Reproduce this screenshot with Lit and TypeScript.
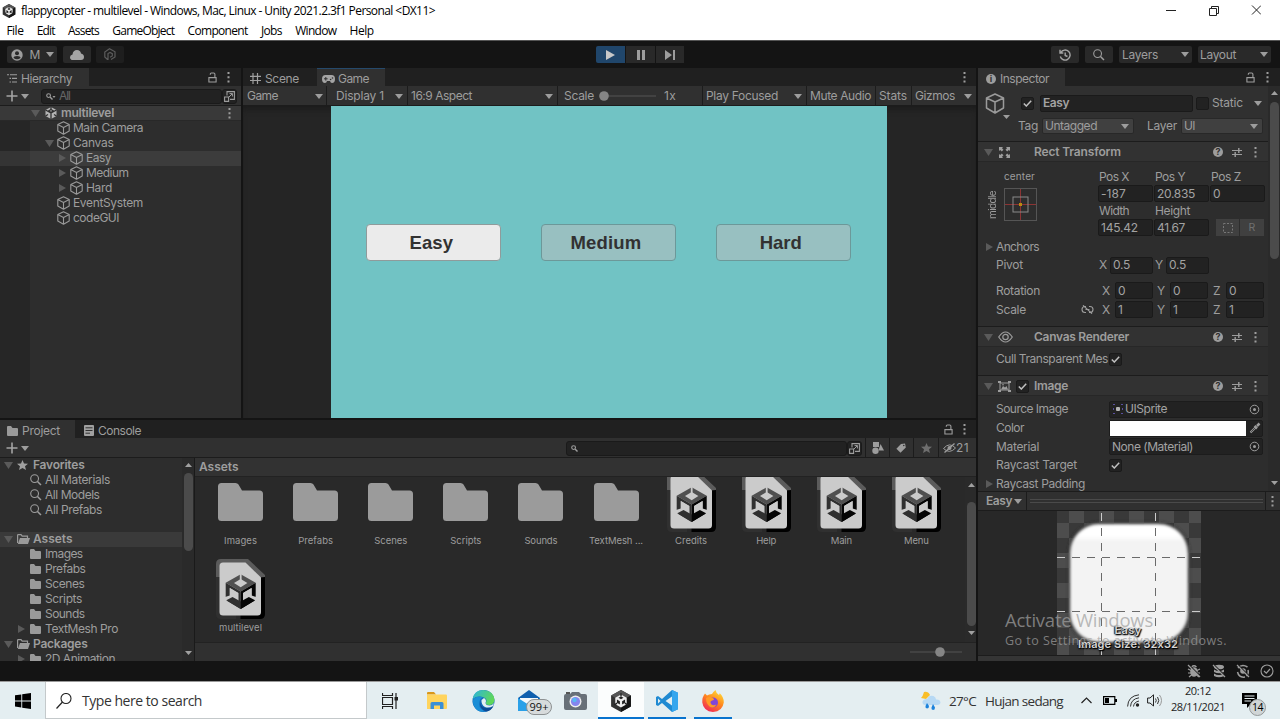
import { LitElement, html, svg, css, unsafeCSS, nothing } from "lit";
import { customElement, property } from "lit/decorators.js";
import { classMap } from "lit/directives/class-map.js";

const pen = document.createElement("canvas").getContext("2d")!;

/* A label that tracks its letters so the line fills a given width. */
@customElement("fit-text")
class FitText extends LitElement {
  @property() text = "";
  @property({ type: Number }) w = 0;
  static styles = css`
    :host { display: inline-block; flex: none; white-space: pre; }
    span { display: block; }
  `;
  render() {
    pen.font = getComputedStyle(this).font;
    const natural = pen.measureText(this.text).width;
    const n = Math.max(1, this.text.length);
    const ls = this.w ? (this.w - natural) / n : 0;
    return html`<span style="letter-spacing:${ls.toFixed(3)}px">${this.text}</span>`;
  }
}

const t = (text: string, w = 0, cls = "") => html`<fit-text class=${cls} .text=${text} .w=${w}></fit-text>`;
const ic = (w: number, h: number, body: unknown, cls = "") =>
  html`<svg class=${"ic " + cls} width=${w} height=${h} viewBox="0 0 ${w} ${h}">${body}</svg>`;

const caret = (cls = "") => ic(8, 5, svg`<path d="M0 0h8L4 5z" fill="#9d9d9d"/>`, cls);
const up = (cls = "") => ic(7, 4, svg`<path d="M0 4h7L3.500 0z" fill="#a0a0a0"/>`, cls);
const down = (cls = "") => ic(7, 4, svg`<path d="M0 0h7L3.500 4z" fill="#a0a0a0"/>`, cls);
const foldOpen = (cls = "") => ic(9, 7, svg`<path d="M0 0h9L4.500 7z" fill="#5a5a5a"/>`, cls);
const foldShut = (cls = "") => ic(7, 8, svg`<path d="M0 0v8L7 4z" fill="#5a5a5a"/>`, cls);
const dots = (cls = "") => ic(3, 11, svg`<path d="M.5 0h2v2h-2zM.5 4.200h2v2h-2zM.5 8.500h2v2h-2z" fill="#9d9d9d"/>`, cls);
const lock = (cls = "") => ic(9, 11, svg`<path d="M.9 5.600h7.200v4.400H.9zM2.300 2.800V2q0-1 1-1h2.400q1.200 0 1.200 1.200v3.400" fill="none" stroke="#9d9d9d" stroke-width="1.100"/>`, cls);
const plus = (cls = "") => ic(12, 12, svg`<path d="M6 .5v11M.5 6h11" stroke="#a4a4a4" stroke-width="1.600"/>`, cls);
const cube = (cls = "") => ic(13, 14, svg`<path d="M6.500 .8L12.200 3.600V10L6.500 13.200L.8 10V3.600zM.8 3.600L6.500 6.500L12.200 3.600M6.500 6.500V13.200" fill="none" stroke="#9a9a9a" stroke-width="1.100" stroke-linejoin="round"/>`, cls);
const bigCube = (cls = "") => ic(20, 21, svg`<path d="M10 1L18.500 5V15L10 20L1.500 15V5zM1.500 5L10 9L18.500 5M10 9V20" fill="none" stroke="#9a9a9a" stroke-width="1.500" stroke-linejoin="round"/>`, cls);
const miniFolder = (cls = "") => ic(11, 10, svg`<path d="M0 1Q0 0 1 0H4L5.500 2H10Q11 2 11 3V9Q11 10 10 10H1Q0 10 0 9z" fill="#9a9a9a"/>`, cls);
const openFolder = (cls = "") => ic(13, 10, svg`<path d="M.6 9V1.200Q.6 .6 1.200 .6H4L5.200 2.200H10.500V4" fill="none" stroke="#9a9a9a" stroke-width="1.200"/><path d="M3 4H13L11 10H.8z" fill="#9a9a9a"/>`, cls);
const glass = (cls = "") => ic(12, 12, svg`<circle cx="4.600" cy="4.600" r="3.900" fill="none" stroke="#9d9d9d" stroke-width="1.100"/><path d="M7.500 7.500L11 11" stroke="#9d9d9d" stroke-width="1.500"/>`, cls);
const tinyGlass = (cls = "", menu = false) => ic(10, 7, svg`<circle cx="2.600" cy="2.600" r="1.900" fill="none" stroke="#9d9d9d" stroke-width="1.100"/><path d="M4 4L6.500 6.500" stroke="#9d9d9d" stroke-width="1.400"/>${menu ? svg`<path d="M6.500 3h3L8 5z" fill="#9d9d9d"/>` : nothing}`, cls);
const popout = (cls = "") => ic(11, 11, svg`<path d="M3 4.500V.6H10.400V8.400H6M.6 6H4.600V10.400H.6z" fill="none" stroke="#9d9d9d" stroke-width="1.100"/><path d="M5 6L8.300 2.700M5.500 2.600H8.400V5.500" fill="none" stroke="#9d9d9d"/>`, cls);
const check = (cls = "") => ic(9, 7, svg`<path d="M.8 3.500L3.300 6L8.200 .8" fill="none" stroke="#c0c0c0" stroke-width="1.500"/>`, cls);
const help = (cls = "") => html`<span class=${"help " + cls}>?</span>`;
const preset = (cls = "") => ic(10, 9, svg`<path d="M0 2.500H10M0 6.500H10" stroke="#9d9d9d"/><path d="M6.800 0V5M3.200 4V9" stroke="#9d9d9d" stroke-width="1.400"/>`, cls);
const target = (cls = "") => ic(11, 11, svg`<circle cx="5.500" cy="5.500" r="4.300" fill="none" stroke="#9d9d9d"/><circle cx="5.500" cy="5.500" r="1.500" fill="#9d9d9d"/>`, cls);
const star = (fill: string, cls = "") => ic(11, 10, svg`<path d="M5.500 0L7 3.500L11 3.800L8 6.300L9 10L5.500 8L2 10L3 6.300L0 3.800L4 3.500z" fill=${fill}/>`, cls);

const unityHex = (w: number) => html`<svg class="ic" width=${w} height=${w} viewBox="0 0 20 20">
  <path d="M10 0L19 5V15L10 20L1 15V5z" fill="#333"/><path d="M10 0L19 5L10 10L1 5z" fill="#555"/><path d="M19 5V15L10 20V10z" fill="#151515"/>
  <path d="M10 4L15.200 7V13L10 16L4.800 13V7z" fill="#eee"/>
  <path d="M10 5.800L12.300 7.100L10 8.500L7.700 7.100zM6.300 8.600L9 10.200V13.200L6.300 11.700zM13.700 8.600L11 10.200V13.200L13.700 11.700z" fill="#222"/>
  <path d="M10 3V6M4 13.500L6.500 12M16 13.500L13.500 12" stroke="#222" stroke-width="1.300"/></svg>`;

const sceneGlyph = (cls = "") => ic(12, 12, svg`<path d="M6 0L11.500 3V9L6 12L.5 9V3z" fill="#b4b4b4"/><path d="M6 6V12M6 6L.5 3M6 6L11.500 3M6 2.500L8.500 4L6 5.300L3.500 4zM6 0V3M.5 9L3 7.500M11.500 9L9 7.500" stroke="#303030" stroke-width="1.300" fill="none"/>`, cls);

const folderArt = html`<svg class="art" width="49" height="60" viewBox="0 0 49 60"><path d="M2 14.500Q2 11 5.500 11H19.500Q21.500 11 22.500 12.500L26 18.500H43.500Q47 18.500 47 22V45.500Q47 49 43.500 49H5.500Q2 49 2 45.500z" fill="#9b9b9b"/></svg>`;
const sceneArt = html`<svg class="art" width="49" height="60" viewBox="0 0 49 60">
  <path d="M0 18V5Q0 0 5 0H32L49 16V20L40 18z" fill="#5b5b5b"/><path d="M0 18H20V60H5Q0 60 0 55z" fill="#303030"/>
  <path d="M24.500 20L49 18V55Q49 60 44 60H24.500z" fill="#000"/>
  <path d="M3.500 7Q3.500 3.500 7 3.500H29.500L45 18.500V53Q45 56.500 41.500 56.500H7Q3.500 56.500 3.500 53z" fill="#cbcbcb"/>
  <path d="M24.700 15.300L39.700 23.800L24.700 32.600L9.700 23.800zM24.700 20L18 24L24.700 28.200L31.400 24z" fill="#505050" fill-rule="evenodd"/>
  <path d="M9.700 23.800L24.700 32.600V50L9.700 41zM13.800 29V40.500L22.300 45.500V34z" fill="#303030" fill-rule="evenodd"/>
  <path d="M39.700 23.800L24.700 32.600V50L39.700 41zM35.600 29V40.500L27.100 45.500V34z" fill="#050505" fill-rule="evenodd"/>
  <path d="M13.800 29L22.300 34V42.500L16 39.500L9 42.500V38L13.800 36.500zM35.600 29L27.100 34V42.500L33.400 39.500L40.400 42.500V38L35.600 36.500z" fill="#cbcbcb"/>
  <path d="M10.300 41.300L16.500 37.900L24.700 42.500V50z" fill="#303030"/><path d="M39.100 41.300L32.900 37.900L24.700 42.500V50z" fill="#050505"/>
  <path d="M24.700 15V21.500" stroke="#cbcbcb" stroke-width="1.800"/></svg>`;

const px = (prop: string, key: string, max: number) =>
  Array.from({ length: max + 1 }, (_, i) => `.${key}${i}{${prop}:${i}px}`).join("");
const utilities = unsafeCSS(px("margin-left", "l", 60) + px("width", "w", 184) + px("height", "h", 60));

interface Node { name: string; w: number; indent: string; fold?: string; on?: boolean }
const tree: Node[] = [
  { name: "Main Camera", w: 70, indent: "l57" },
  { name: "Canvas", w: 40.500, indent: "l45", fold: "open" },
  { name: "Easy", w: 25, indent: "l59", fold: "shut", on: true },
  { name: "Medium", w: 42.500, indent: "l59", fold: "shut" },
  { name: "Hard", w: 26, indent: "l59", fold: "shut" },
  { name: "EventSystem", w: 70, indent: "l57" },
  { name: "codeGUI", w: 46, indent: "l57" },
];
const folders: [string, number, number][] = [["Images", 37.500, 33], ["Prefabs", 40.500, 35], ["Scenes", 39.500, 33], ["Scripts", 37, 31], ["Sounds", 39.500, 33]];
const assets: [string, number, boolean][] = [
  ...folders.map(([n, , w]) => [n, w, false] as [string, number, boolean]),
  ["TextMesh ...", 54, false], ["Credits", 32, true], ["Help", 20, true], ["Main", 21, true], ["Menu", 25, true], ["multilevel", 43, true],
];

@customElement("app-root")
class AppRoot extends LitElement {
  static styles = [utilities, css`
    :host { display: flex; flex-direction: column; width: 1280px; height: 719px; overflow: hidden; background: #141414; color: #9d9d9d; font: 12px/14px Inter, "Noto Sans", sans-serif; position: relative; }
    * { box-sizing: border-box; }
    .ic, .art { display: block; flex: none; }
    .r { display: flex; align-items: center; flex: none; }
    .g { flex: 1; }
    .b { font-weight: 600; }
    .pl { padding-left: 18px; }
    .win { background: #fff; color: #000; font-family: "Open Sans", "Noto Sans", sans-serif; }
    .title { height: 22px; padding-left: 2px; }
    .menu { height: 19px; padding: 0 0 1px 6.400px; border-bottom: 1px solid #555; }
    .menu .item + .item { margin-left: 13.300px; }
    .tools { height: 27px; }
    .gap { width: 367px; }
    .btn { display: flex; align-items: center; justify-content: center; flex: none; height: 17px; background: #292929; border-radius: 2px; }
    .btn.dim { background: #1e1e1e; }
    .btn.play { background: #20466b; border-radius: 2px 0 0 2px; }
    .btn.sq { border-radius: 0; }
    .drop { justify-content: flex-start; }
    .main { display: flex; height: 593px; gap: 2px; flex: none; }
    .left { width: 976px; display: flex; flex-direction: column; gap: 2px; }
    .top { display: flex; height: 350px; gap: 2px; }
    .panel { background: #2d2d2d; display: flex; flex-direction: column; overflow: hidden; }
    .tabs { height: 18px; background: #202020; }
    .tab { display: flex; align-items: center; height: 18px; flex: none; padding-top: 3px; }
    .tab.on { background: #303030; }
    .tab.live { box-shadow: inset 0 1px #25496b; }
    .bar { height: 20px; background: #303030; border-bottom: 1px solid #1c1c1c; padding-top: 1px; }
    .box { display: flex; align-items: center; flex: none; background: #222; border: 1px solid #1a1a1a; border-radius: 3px; }
    .search { width: 281px; height: 15px; }
    .dimt { color: #666; }
    .hier { width: 241px; }
    .hbody { flex: 1; background: linear-gradient(90deg, #262626 30px, #2d2d2d 30px); }
    .row { display: flex; align-items: center; height: 15px; padding-bottom: 1px; }
    .row.on { background: linear-gradient(90deg, #343434 30px, #3c3c3c 30px); }
    .row.scene { background: #393939; box-shadow: inset 0 -1px #282828; }
    .game { width: 733px; }
    .sep { width: 1px; height: 19px; margin-top: -1px; background: #1c1c1c; flex: none; }
    .stage { display: flex; height: 312px; background: #252525; padding-left: 88px; box-shadow: inset 0 6px 6px -3px #1b1b1b; }
    .view { width: 556px; height: 312px; background: #71c3c4; display: flex; padding: 118px 0 0 35.300px; gap: 39.700px; }
    .gbtn { width: 135px; height: 37px; border-radius: 4px; border: 1px solid #6c9899; background: #98c0c1; color: #323232; font: bold 18.500px/36px "Liberation Sans", Arial, sans-serif; text-align: center; padding-right: 5px; }
    .gbtn.on { background: #ebebeb; border-color: #8f9b9b; }
    .project { height: 241px; width: 976px; }
    .pbody { display: flex; height: 203px; }
    .list { width: 182px; height: 203px; overflow: hidden; flex: none; }
    .list .row.on { background: #3a3a3a; }
    .blank { height: 14px; }
    .scroll { width: 12px; flex: none; display: flex; flex-direction: column; align-items: center; background: #2a2a2a; }
    .thumb { width: 9px; border-radius: 5px; background: #4b4b4b; flex: none; }
    .th1 { height: 78px; }
    .th2 { height: 124px; }
    .th3 { height: 157px; }
    .content { flex: 1; min-width: 0; border-left: 1px solid #1a1a1a; display: flex; flex-direction: column; background: #292929; }
    .crumb { height: 19px; background: #323232; border-bottom: 1px solid #222; padding-left: 4px; }
    .gridrow { display: flex; height: 165px; }
    .grid { width: 770px; flex: none; height: 165px; overflow: hidden; display: grid; grid-template-columns: repeat(10, 75.100px); grid-auto-rows: 87px; padding-left: 8px; align-content: start; }
    .cell { display: flex; flex-direction: column; align-items: center; height: 87px; font-size: 9.500px; line-height: 12px; }
    .cell .art { margin-top: -5px; margin-bottom: 3px; }
    .foot { height: 19px; background: #303030; border-top: 1px solid #222; }
    .insp { width: 302px; background: #2d2d2d; display: flex; flex-direction: column; }
    .ibody { display: flex; height: 405px; }
    .icol { width: 290px; height: 405px; overflow: hidden; flex: none; }
    .ihead { height: 56px; background: #303030; border-bottom: 1px solid #1c1c1c; }
    .hh { height: 12px; }
    .smallc { align-self: flex-start; margin-top: -5px; }
    .comp { display: flex; align-items: center; height: 20px; background: #323232; border-bottom: 1px solid #272727; padding-top: 1px; }
    .block { border-bottom: 1px solid #1c1c1c; }
    .chk { display: flex; align-items: center; justify-content: center; flex: none; width: 13px; height: 13px; background: #222; border: 1px solid #1a1a1a; border-radius: 2px; }
    .dd { display: flex; align-items: center; height: 16px; background: #404040; border: 1px solid #282828; border-radius: 2px; flex: none; }
    .f { display: flex; align-items: center; height: 17px; background: #222; border: 1px solid #1a1a1a; border-radius: 2px; padding-left: 2px; color: #a2a2a2; flex: none; }
    .help { display: flex; align-items: center; justify-content: center; width: 10px; height: 10px; border-radius: 50%; background: #9d9d9d; color: #303030; font: bold 9px/10px Inter, sans-serif; flex: none; }
    .rect { display: grid; grid-template-columns: 120px 56px 56px 55px; grid-template-rows: 23px 17px 17px 17px; height: 76px; }
    .rect > .lab { align-self: end; padding-left: 1px; line-height: 16px; }
    .anchor { grid-row: 1 / span 4; display: grid; grid-template-columns: 26px 34px; grid-template-rows: 26px 34px; font-size: 10px; }
    .anchor .cl { grid-column: 1 / 3; padding: 7px 0 0 26px; }
    .anchor .vl { writing-mode: vertical-rl; transform: rotate(180deg); justify-self: center; align-self: center; height: 28px; line-height: 12px; margin-left: 2px; }
    .tb { background: #404040; height: 17px; display: flex; align-items: center; justify-content: center; color: #707070; font-size: 10.500px; }
    .obj { display: flex; align-items: center; width: 154px; height: 17px; background: #222; border: 1px solid #1c1c1c; border-radius: 2px; color: #a2a2a2; flex: none; }
    .hr { height: 18.700px; }
    .swatch { width: 136px; height: 15px; background: #fff; }
    .phead { height: 20px; background: #303030; border-top: 1px solid #1c1c1c; border-bottom: 1px solid #1c1c1c; }
    .lines { width: 233px; height: 4px; border-top: 1px solid #4a4a4a; border-bottom: 1px solid #4a4a4a; flex: none; }
    .preview { height: 144px; background: #282828; padding-left: 79px; position: relative; }
    .pstrip { height: 6px; background: #353535; border-top: 1px solid #1c1c1c; }
    .cap { position: absolute; left: 0; right: 2px; color: #d8d8d8; font-size: 11px; font-weight: 600; line-height: 14px; text-shadow: 1px 1px 1px #000, 0 1px 2px #000, -1px 0 1px #222; display: flex; justify-content: center; }
    .c1 { top: 112px; }
    .c2 { top: 126px; }
    .status { height: 20px; }
    .task { height: 38px; width: 1280px; border-top: 1px solid #9a9a9a; background: #e4eef1; color: #222; font-family: "Open Sans", "Noto Sans", sans-serif; align-items: stretch; }
    .task > * { display: flex; align-items: center; flex: none; }
    .task > .g { flex: 1; }
    .find { width: 322px; height: 37px; background: #fff; border: 1px solid #c4c9cb; border-top: 0; font-size: 14px; color: #333; padding-top: 1px; }
    .app { justify-content: center; width: 46px; height: 37px; position: relative; }
    .tv { margin-right: 1px; }
    .app.run::after { content: ""; position: absolute; left: 4px; right: 4px; bottom: 0; height: 2px; background: #0873ce; }
    .app.act { background: #fbfdfd; }
    .app.act::after { left: 0; right: 0; }
    .badge { position: absolute; left: 20px; top: 17px; width: 26px; height: 16px; border-radius: 8px; background: #d7dbdc; border: 1px solid #8d9192; color: #111; font-size: 11px; line-height: 14px; text-align: center; }
    .wx { font-size: 13.500px; color: #333; }
    .clock { flex-direction: column; align-items: center; font-size: 11px; line-height: 16px; padding-top: 1px; margin-left: 8px; }
    .note { position: relative; width: 24px; margin: 0 14px 0 17px; }
    .count { position: absolute; left: 7px; top: 17px; width: 17px; height: 17px; border-radius: 50%; background: #d0d5d6; border: 1px solid #94999a; font-size: 10.500px; line-height: 15px; text-align: center; color: #000; }
    .mark { position: absolute; left: 1005px; top: 608px; color: rgba(160, 160, 160, 0.72); font-family: "Open Sans", "Noto Sans", sans-serif; display: flex; flex-direction: column; }
    .m1 { font-size: 18.500px; line-height: 24px; }
    .m2 { font-size: 12.500px; line-height: 18px; }
  `];

  compHead(name: string, w: number, icon: unknown, on = false) {
    return html`<div class="comp">${foldOpen("l6")}<span class="r l5 w16">${icon}</span>
      <span class="r w20">${on ? html`<span class="chk l2">${check()}</span>` : nothing}</span>
      ${t(name, w, "b")}<span class="g"></span>${help()}${preset("l9")}${dots("l12")}<span class="w11"></span></div>`;
  }

  axis(label: string, value: string) {
    return html`${t(label, 0, "w13")}<span class="f w38">${value}</span>`;
  }

  hierarchy() {
    return html`<div class="panel hier">
      <div class="r tabs"><div class="tab on w89">${ic(10, 9, svg`<path d="M0 .8H2M3 .8H10M2.500 4.400H4M5 4.400H10M2.500 8H4M5 8H10" stroke="#9d9d9d" stroke-width="1.100"/>`, "l7")}${t("Hierarchy", 51, "l4")}</div>
        <span class="g"></span>${lock()}${dots("l10")}<span class="w11"></span></div>
      <div class="r bar">${plus("l6")}${caret("l3")}
        <div class="box w181 l12 h15">${tinyGlass("l4", true)}${t("All", 11, "l3 dimt")}<span class="g"></span></div>
        <div class="box w15 h15">${popout("l1")}</div></div>
      <div class="hbody">
        <div class="row scene">${foldOpen("l31")}${sceneGlyph("l5")}${t("multilevel", 53, "b l4")}<span class="g"></span>${dots()}<span class="w10"></span></div>
        ${tree.map((n) => html`<div class=${classMap({ row: true, on: !!n.on })}>
          ${n.fold === "open" ? foldOpen(n.indent) : n.fold === "shut" ? foldShut(n.indent) : nothing}
          ${cube(n.fold === "open" ? "l3" : n.fold ? "l4" : n.indent)}${t(n.name, n.w, "l3")}</div>`)}
      </div></div>`;
  }

  game() {
    return html`<div class="panel game">
      <div class="r tabs"><div class="tab w74">${ic(11, 11, svg`<path d="M3 0V11M7.500 0V11M0 3.300H11M0 7.500H11" stroke="#a0a0a0" stroke-width="1.200"/>`, "l7")}${t("Scene", 34, "l4")}</div>
        <div class="tab on live w68">${ic(13, 8, svg`<path d="M3.500 0H9.500Q13 0 13 4Q13 8 10 8Q8.500 8 8 6H5Q4.500 8 3 8Q0 8 0 4Q0 0 3.500 0z" fill="#a4a4a4"/><path d="M2 3.800H5.600M3.800 2V5.600" stroke="#303030"/><circle cx="8.600" cy="4.500" r=".8" fill="#303030"/><circle cx="10.500" cy="3" r=".8" fill="#303030"/>`, "l5")}${t("Game", 31, "l3")}</div>
        <span class="g"></span>${dots()}<span class="w10"></span></div>
      <div class="r bar">${t("Game", 31, "l4")}${caret("l37")}<span class="sep l3"></span>${t("Display 1", 48, "l9")}${caret("l11")}<span class="sep l4"></span>
        ${t("16:9 Aspect", 61, "l3")}<span class="w73"></span>${caret()}<span class="sep l4"></span>
        ${t("Scale", 30, "l6")}${ic(62, 10, svg`<path d="M8 5H57" stroke="#484848" stroke-width="1.500"/><circle cx="5" cy="5" r="4.800" fill="#858585"/>`, "l5")}${t("1x", 12, "l3")}
        <span class="sep l26"></span>${t("Play Focused", 72, "l3")}${caret("l16")}<span class="sep l4"></span>${t("Mute Audio", 61, "l3")}<span class="sep l4"></span>${t("Stats", 28, "l3")}<span class="sep l4"></span>${t("Gizmos", 40, "l3")}${caret("l9")}</div>
      <div class="stage"><div class="view"><div class="gbtn on">${t("Easy", 43.500)}</div><div class="gbtn">${t("Medium", 71)}</div><div class="gbtn">${t("Hard", 42)}</div></div></div>
    </div>`;
  }

  project() {
    return html`<div class="panel project">
      <div class="r tabs"><div class="tab on w75">${miniFolder("l7")}${t("Project", 38, "l4")}</div>
        <div class="tab">${ic(10, 11, svg`<rect width="10" height="11" rx="1" fill="#a0a0a0"/><path d="M1.500 2.800H8.500M1.500 5.500H8.500M1.500 8.200H6" stroke="#303030"/>`, "l9")}${t("Console", 43, "l4")}</div>
        <span class="g"></span>${lock()}${dots("l10")}<span class="w10"></span></div>
      <div class="r bar">${plus("l6")}${caret("l3")}<span class="g"></span>
        <div class="box search">${tinyGlass("l4")}</div><div class="box w15 h15">${popout("l1")}</div>
        <span class="sep l3"></span>${ic(12, 12, svg`<path d="M1 0h6v5H1z" fill="#9d9d9d"/><circle cx="3.500" cy="8.800" r="3.200" fill="#9d9d9d"/><path d="M8.500 2L12 8.500H6.500z" fill="#9d9d9d"/>`, "l6")}
        <span class="sep l5"></span>${ic(10, 10, svg`<path d="M5 1L9 .5L9.800 4.500L4.500 9.800L.4 5.800z" fill="#9d9d9d"/><circle cx="7.800" cy="2.500" r=".8" fill="#303030"/>`, "l6")}
        <span class="sep l7"></span>${star("#6e6e6e", "l7")}
        <span class="sep l6"></span>${ic(13, 10, svg`<path d="M.5 5.500Q6.500-1.500 12.500 5Q6.500 11.500 .5 5.500z" fill="none" stroke="#9d9d9d"/><circle cx="6.500" cy="5" r="2" fill="#9d9d9d"/><path d="M1.500 9.500L11.500 .5" stroke="#9d9d9d" stroke-width="1.300"/>`, "l4")}${t("21", 13)}<span class="w7"></span></div>
      <div class="pbody"><div class="list">
        <div class="row">${foldOpen("l4")}${star("#a0a0a0", "l4")}${t("Favorites", 51.500, "b l5")}</div>
        ${([["All Materials", 65], ["All Models", 54.500], ["All Prefabs", 57]] as [string, number][]).map(([n, w]) => html`<div class="row">${glass("l30")}${t(n, w, "l3")}</div>`)}
        <div class="blank"></div>
        <div class="row on">${foldOpen("l4")}${openFolder("l4")}${t("Assets", 39.500, "b l3")}</div>
        ${folders.map(([n, w]) => html`<div class="row">${miniFolder("l30")}${t(n, w, "l4")}</div>`)}
        <div class="row">${foldShut("l18")}${miniFolder("l5")}${t("TextMesh Pro", 73, "l4")}</div>
        <div class="row">${foldOpen("l4")}${openFolder("l4")}${t("Packages", 54.500, "b l3")}</div>
        <div class="row">${foldShut("l18")}${miniFolder("l5")}${t("2D Animation", 70, "l4")}</div>
      </div>
      <div class="scroll"><span class="h5"></span>${up()}<span class="h6"></span><span class="thumb th1"></span><span class="g"></span>${down()}<span class="h6"></span></div>
      <div class="content">
        <div class="r crumb">${t("Assets", 39.500, "b")}</div>
        <div class="gridrow"><div class="grid">${assets.map(([n, w, s]) => html`<div class="cell">${s ? sceneArt : folderArt}${t(n, w)}</div>`)}</div>
          <div class="scroll"><span class="h6"></span>${up()}<span class="h15"></span><span class="thumb th2"></span><span class="h5"></span>${down()}</div></div>
        <div class="r foot"><span class="g"></span>${ic(54, 10, svg`<path d="M1 5H53" stroke="#484848" stroke-width="1.500"/><circle cx="31" cy="5" r="4.800" fill="#858585"/>`)}<span class="w13"></span></div>
      </div></div></div>`;
  }

  inspector() {
    const rectIcon = ic(11, 11, svg`<path d="M0 0H4L3 1.200L4.500 2.800L2.800 4.500L1.200 3L0 4zM11 0V4L9.800 3L8.200 4.500L6.500 2.800L8 1.200L7 0zM0 11V7L1.200 8L2.800 6.500L4.500 8.200L3 9.800L4 11zM11 11H7L8 9.800L6.500 8.200L8.200 6.500L9.800 8L11 7z" fill="#9d9d9d"/>`, "l1");
    const eye = ic(15, 12, svg`<path d="M.7 6Q7.500-4 14.300 6Q7.500 16 .7 6z" fill="none" stroke="#9d9d9d" stroke-width="1.200"/><circle cx="7.500" cy="6" r="2.700" fill="none" stroke="#9d9d9d" stroke-width="1.200"/>`);
    const pic = ic(13, 11, svg`<path d="M2 2H11V9H2z" fill="none" stroke="#9d9d9d"/><path d="M0 0h3v2H0zM10 0h3v2h-3zM0 9h3v2H0zM10 9h3v2h-3z" fill="#9d9d9d"/><path d="M3 8.500L5 5L7 6.500L8.500 5L10 8.500z" fill="#9d9d9d"/><circle cx="5" cy="3.800" r=".8" fill="#9d9d9d"/>`);
    const checks = [];
    for (let y = 0; y < 10; y++) for (let x = 0; x < 10; x++) if ((x + y) % 2) checks.push(svg`<rect x=${x * 15 - 3} y=${y * 15 - 3} width="15" height="15" fill="#4d4d4d"/>`);
    return html`<div class="insp">
      <div class="r tabs"><div class="tab on w87"><span class="help l8">i</span>${t("Inspector", 49, "l4")}</div><span class="g"></span>${lock()}${dots("l11")}<span class="w11"></span></div>
      <div class="ibody"><div class="icol">
        <div class="ihead">
          <div class="r h34">${bigCube("l7")}<span class="chk l16">${check()}</span><span class="f w153 l6">${t("Easy", 26, "b")}</span><span class="chk l3"></span>${t("Static", 31, "l3")}${caret("l11")}</div>
          <div class="r hh">${ic(7, 4, svg`<path d="M0 0h7L3.500 4z" fill="#9d9d9d"/>`, "l25 smallc")}${t("Tag", 20, "l8")}<span class="dd w92 l4">${t("Untagged", 52, "l2")}<span class="g"></span>${caret()}<span class="w4"></span></span>
            ${t("Layer", 30, "l13")}<span class="dd w82 l4">${t("UI", 11, "l2")}<span class="g"></span>${caret()}<span class="w4"></span></span></div>
        </div>
        <div class="block">
          ${this.compHead("Rect Transform", 87, rectIcon)}
          <div class="rect">
            <div class="anchor"><div class="cl">${t("center", 31)}</div><div class="vl">${t("middle", 28)}</div>
              ${ic(34, 34, svg`<rect x=".5" y=".5" width="32" height="32" fill="none" stroke="#555"/><path d="M16.500 1V32M1 16.500H32" stroke="#8c3434"/><rect x="9" y="9" width="15" height="15" fill="none" stroke="#8a8a8a"/><path d="M15 15h3v3h-3z" fill="#b98a10"/>`)}</div>
            ${t("Pos X", 30, "lab")}${t("Pos Y", 30, "lab")}${t("Pos Z", 30, "lab")}
            <span class="f w55">${t("-187", 25)}</span><span class="f w55">${t("20.835", 38)}</span><span class="f w55">0</span>
            ${t("Width", 30, "lab")}${t("Height", 35, "lab")}<span></span>
            <span class="f w55">${t("145.42", 37)}</span><span class="f w55">${t("41.67", 28)}</span>
            <span class="r"><span class="tb w23 l6">${ic(10, 10, svg`<rect x=".5" y=".5" width="9" height="9" fill="none" stroke="#777" stroke-dasharray="2 1.500"/>`)}</span><span class="tb w24 l1">R</span></span>
          </div>
          <div class="r h17">${foldShut("l8")}${t("Anchors", 43, "l3")}</div>
          <div class="r h20"><span class="r w121 pl">${t("Pivot", 27)}</span>${t("X", 0, "w11")}<span class="f w43">${t("0.5", 17)}</span>${t("Y", 0, "l2 w11")}<span class="f w43">${t("0.5", 17)}</span></div>
          <div class="r h6"></div>
          <div class="r h19"><span class="r w124 pl">${t("Rotation", 44)}</span>${this.axis("X", "0")}<span class="w4"></span>${this.axis("Y", "0")}<span class="w5"></span>${this.axis("Z", "0")}</div>
          <div class="r h19"><span class="r w103 pl">${t("Scale", 30)}</span>${ic(13, 9, svg`<path d="M5 1.500H4Q1 1.500 1 4.500Q1 7.500 4 7.500H5M8 1.500H9Q12 1.500 12 4.500Q12 7.500 9 7.500H8M4.500 4.500H8.500M2 .3L11 8.700" fill="none" stroke="#9d9d9d" stroke-width="1.100"/>`)}<span class="w8"></span>${this.axis("X", "1")}<span class="w4"></span>${this.axis("Y", "1")}<span class="w5"></span>${this.axis("Z", "1")}</div>
          <div class="h7"></div>
        </div>
        <div class="block">${this.compHead("Canvas Renderer", 95, eye)}
          <div class="r h24"><span class="r w131 pl">${t("Cull Transparent Mes", 112)}</span><span class="chk">${check()}</span></div><div class="h4"></div></div>
        <div>${this.compHead("Image", 34, pic, true)}
          <div class="h4"></div>
          <div class="r hr"><span class="r w131 pl">${t("Source Image", 72)}</span><span class="obj">${ic(10, 10, svg`<rect x="3" y="3" width="4" height="4" rx="1" fill="#b5b5b5"/><path d="M0 0h2v1H0zM8 0h2v1H8zM0 9h2v1H0zM8 9h2v1H8zM0 4h1v2H0zM9 4h1v2H9z" fill="#5a50a0"/>`, "l3")}${t("UISprite", 42, "l2")}<span class="g"></span>${target()}<span class="w2"></span></span></div>
          <div class="r hr"><span class="r w131 pl">${t("Color", 28)}</span><span class="obj"><span class="swatch"></span>${ic(12, 12, svg`<path d="M1.500 10.500L7 5" stroke="#9d9d9d" stroke-width="2.200"/><path d="M2.200 9.800L6.500 5.500" stroke="#2d2d2d" stroke-width=".8"/><path d="M5.500 4L8 6.500M8 4L10.500 1.500" stroke="#9d9d9d" stroke-width="2.500"/>`, "l3")}</span></div>
          <div class="r hr"><span class="r w131 pl">${t("Material", 43)}</span><span class="obj">${t("None (Material)", 81, "l2")}<span class="g"></span>${target()}<span class="w2"></span></span></div>
          <div class="r hr"><span class="r w131 pl">${t("Raycast Target", 81)}</span><span class="chk">${check()}</span></div>
          <div class="r hr">${foldShut("l8")}${t("Raycast Padding", 89, "l3")}</div></div>
      </div>
      <div class="scroll"><span class="h5"></span>${up()}<span class="h7"></span><span class="thumb th3"></span><span class="g"></span>${down()}<span class="h6"></span></div></div>
      <div class="r phead">${t("Easy", 26, "b l8")}${caret("l2")}<span class="sep l4"></span><span class="lines l3"></span><span class="sep l2"></span>${dots("l5")}</div>
      <div class="preview">
        <svg class="ic" width="144" height="144" viewBox="0 0 144 144"><rect width="144" height="144" fill="#393939"/>${checks}
          <defs><linearGradient id="pg" x1="0" y1="0" x2="0" y2="1"><stop offset="0" stop-color="#fff"/><stop offset=".1" stop-color="#fff"/><stop offset=".15" stop-color="#f3f3f3"/><stop offset="1" stop-color="#f3f3f3"/></linearGradient>
          <filter id="soft"><feGaussianBlur stdDeviation="1.600"/></filter></defs>
          <rect x="11" y="11" width="122" height="122" rx="31" fill="#222" opacity=".7" filter="url(#soft)"/>
          <rect x="13" y="13" width="118" height="118" rx="29" fill="url(#pg)" filter="url(#soft)"/>
          <path d="M44.500 2V144M98.500 2V144M0 46.500H144M0 100.500H144" stroke="#ccc" stroke-dasharray="8 7"/>
          <path d="M44.500 17V136M98.500 17V136M15 46.500H132M15 100.500H132" stroke="#6a6a6a" stroke-dasharray="8 7"/></svg>
        <div class="cap c1">${t("Easy", 27)}</div><div class="cap c2">${t("Image Size: 32x32", 101)}</div>
      </div>
      <div class="pstrip"></div>
    </div>`;
  }

  taskbar() {
    return html`<div class="r task">
      <span class="w45">${ic(16, 16, svg`<path d="M0 2.200L6.300 1.400V7.400H0zM7.200 1.200L16 0V7.400H7.200zM0 8.400H6.300V14.400L0 13.600zM7.200 8.400H16V16L7.200 14.700z" fill="#000"/>`, "l15")}</span>
      <div class="find">${ic(16, 16, svg`<circle cx="10" cy="5.500" r="5" fill="none" stroke="#222" stroke-width="1.100"/><path d="M6.500 9L.5 15.500" stroke="#222" stroke-width="1.200"/>`, "l10")}${t("Type here to search", 120, "l10")}</div>
      <span class="app tv">${ic(17, 16, svg`<path d="M.5 0V2.500H10.500V0M.5 16V13.500H10.500V16M.5 4.500H10.500V11.500H.5zM14 0V16" fill="none" stroke="#222" stroke-width="1.200"/><path d="M12.500 4h3.500v3.500h-3.500z" fill="#222"/>`)}</span>
      <span class="app">${ic(20, 18, svg`<path d="M0 1Q0 0 1 0H7L9 2.500H0z" fill="#d9971b"/><path d="M0 2.500H19Q20 2.500 20 3.500V16Q20 17 19 17H0z" fill="#ffd45e"/><path d="M3.500 17V11.500Q3.500 10 5 10H15Q16.500 10 16.500 11.500V17H13V13.500H7V17z" fill="#3a8fd6"/>`)}</span>
      <span class="app">${ic(23, 22, svg`<defs><linearGradient id="e1" x1="0" y1="0" x2="1" y2=".4"><stop offset="0" stop-color="#2bb3e0"/><stop offset="1" stop-color="#5fd75a"/></linearGradient></defs><circle cx="11.500" cy="11" r="11" fill="#1269b8"/><path d="M.6 9Q2 0 11.500 0Q22 1 22.500 10Q22 15 17 15Q13 15 14 12.500Q15.500 9 12 7.500Q6 5 .6 9z" fill="url(#e1)"/><path d="M8 10Q5 20 15 21Q8 23.500 3.500 18.500Q-1 12 2 8.500Q6 5 11 7.500Q8.500 8 8 10z" fill="#1b8ed6"/><path d="M8 12Q9 18 15 18Q19 18 21.500 16Q19 21 14 21.500Q8 20 8 12z" fill="#0c4a94"/><path d="M12 8Q15 10 13.500 13Q13.800 15.500 17.500 15.500Q20 15.500 22 13L21 16Q17 18.500 13 17Q9 14.500 9.500 10z" fill="#e4eef1"/>`)}</span>
      <span class="app">${ic(22, 22, svg`<path d="M0 8L11 0L22 8V21H0z" fill="#0f5fae"/><path d="M2 8H20V14L11 18L2 14z" fill="#f4f8fb"/><path d="M0 8L11 15L22 8V21H0z" fill="#2aa0e8"/>`)}<span class="badge">${t("99+", 19)}</span></span>
      <span class="app">${ic(23, 19, svg`<path d="M2 3H6L8 1H15L17 3H21Q23 3 23 5V17Q23 19 21 19H2Q0 19 0 17V5Q0 3 2 3z" fill="#687078"/><path d="M2 1h4v2H2z" fill="#555"/><circle cx="11.500" cy="10.500" r="6" fill="#eee"/><circle cx="11.500" cy="10.500" r="4.600" fill="#8585ee"/><circle cx="10.500" cy="9" r="2.200" fill="#58b8f2"/>`)}</span>
      <span class="app run act">${unityHex(22)}</span>
      <span class="app run">${ic(22, 22, svg`<path d="M16 0L22 2.800V19.200L16 22L6 13L2 16L0 15V7L2 6L6 9zM16 6.500L9.500 11L16 15.500zM2 8.500V13.500L4.500 11z" fill="#1f8ad2" fill-rule="evenodd"/><path d="M16 0L22 2.800V19.200L16 22z" fill="#35a6ee"/>`)}</span>
      <span class="app run">${ic(22, 22, svg`<defs><linearGradient id="ff" x1=".8" y1="0" x2=".2" y2="1"><stop offset="0" stop-color="#ffe13a"/><stop offset=".45" stop-color="#ff8a1e"/><stop offset="1" stop-color="#f0205a"/></linearGradient></defs><path d="M3 3.500L5 5.500Q7 4 10 4Q11 2 13.500 0Q14 3 17 5Q18 3.500 17.500 3Q22 7 21.800 12.500Q20.500 21.500 11 22Q1.500 21.500 .3 12.500Q0 7 3 3.500z" fill="url(#ff)"/><circle cx="11" cy="12.500" r="5" fill="#8146d8"/><path d="M4 8Q8 6 11.500 8.500Q13 10 10 10.500Q8 11 8.500 13Q10 16.500 14.500 14.500Q12 19 7.500 16.500Q4 13.500 4 8z" fill="#ff9a24"/>`)}</span>
      <span class="g"></span>
      <span>${ic(22, 20, svg`<path d="M4 1Q8 0 10 4L6 8L1 7Q3 5 4 1z" fill="#f9be28"/><path d="M6 14Q2 14 2.500 10.500Q3.500 7.500 7 8Q9 3.500 13.500 5Q16 6 16 8.500Q20 8 20.500 11.500Q20 14 17 14z" fill="#b7d9f4"/><path d="M7 12L9 15Q9 17.500 7 17.500Q5 17 5.500 15zM13 13L15 16.500Q15 19 13 19Q11 18.500 11.500 16.500z" fill="#1b82dc"/>`)}</span>
      <span class="wx">${t("27°C", 27, "l7")}${t("Hujan sedang", 78, "l9")}</span>
      <span>${ic(11, 7, svg`<path d="M.5 6L5.500 1L10.500 6" fill="none" stroke="#222" stroke-width="1.200"/>`, "l18")}</span>
      <span>${ic(14, 9, svg`<path d="M.6 .6H11.800V8.400H.6z" fill="none" stroke="#000" stroke-width="1.200"/><path d="M2 2h4v5H2zM12 3h2v3h-2z" fill="#000"/>`, "l11")}</span>
      <span>${ic(13, 13, svg`<path d="M.6 12.500Q1 2 12 .8M3.500 12.500Q4 5 12 3.800M6.500 12.500Q7 8 12 7" fill="none" stroke="#333"/><circle cx="10.500" cy="11" r="1.700" fill="#222"/>`, "l10")}</span>
      <span>${ic(16, 13, svg`<path d="M.6 4H3L6.500 .8V12L3 9H.6z" fill="none" stroke="#222"/><path d="M8.500 4.500Q10 6.500 8.500 8.500M10.500 3Q13 6.500 10.500 10" fill="none" stroke="#333"/><path d="M12.500 1Q16.500 6.500 12.500 12" fill="none" stroke="#999"/>`, "l7")}</span>
      <div class="clock">${t("20:12", 26)}${t("28/11/2021", 54)}</div>
      <div class="note">${ic(16, 16, svg`<path d="M0 0H15V11H9L5 15V11H0z" fill="#000"/><path d="M2.500 3H12.500M2.500 5.500H12.500M2.500 8H9" stroke="#e4eef1"/>`)}<span class="count">${t("14", 11)}</span></div>
    </div>`;
  }

  render() {
    return html`
      <div class="r win title">${unityHex(14)}${t("flappycopter - multilevel - Windows, Mac, Linux - Unity 2021.2.3f1 Personal <DX11>", 414, "l5")}<span class="g"></span>
        ${ic(104, 12, svg`<path d="M9 5.500H19" stroke="#222"/><path d="M52.500 3.500H59.500V10.500H52.500zM54.500 3.500V1.500H61.500V8.500H59.500" fill="none" stroke="#222"/><path d="M95 .5L104 9.500M104 .5L95 9.500" stroke="#222"/>`)}<span class="w19"></span></div>
      <div class="r win menu">${([["File", 17], ["Edit", 18], ["Assets", 31], ["GameObject", 62], ["Component", 60], ["Jobs", 21], ["Window", 41], ["Help", 24]] as [string, number][]).map(([n, w]) => t(n, w, "item"))}</div>
      <div class="r tools">
        <div class="btn w50 l7">${ic(12, 12, svg`<circle cx="6" cy="6" r="5.700" fill="#9d9d9d"/><circle cx="6" cy="4.200" r="2" fill="#292929"/><path d="M2.500 9Q2.500 7 6 7Q9.500 7 9.500 9Q6 11.500 2.500 9z" fill="#292929"/>`)}${t("M", 10, "l7")}${caret("l6")}</div>
        <div class="btn w28 l6">${ic(14, 10, svg`<path d="M3 10Q0 10 0 7.200Q0 5 2.500 4.500Q3 0 7 0Q10.500 0 11 3.500Q14 4 14 7Q14 10 11 10z" fill="#a4a4a4"/>`)}</div>
        <div class="btn dim w28 l5">${ic(12, 13, svg`<path d="M3.500 11.500L.8 9V4L5.500 .8L11 3.800V9L7 11.500M4 12V5.500L6 4.500L8.300 5.700V8L6 9.300" fill="none" stroke="#5c5c5c" stroke-width="1.200"/>`)}</div>
        <span class="g"></span>
        <div class="btn play w29">${ic(9, 10, svg`<path d="M0 0L9 5L0 10z" fill="#c8c8c8"/>`)}</div>
        <div class="btn sq w29 l1">${ic(8, 10, svg`<path d="M0 0h3v10H0zM5 0h3v10H5z" fill="#9d9d9d"/>`)}</div>
        <div class="btn sq w28 l1">${ic(10, 10, svg`<path d="M0 0L7 5L0 10zM8 0h2v10H8z" fill="#9d9d9d"/>`)}</div>
        <span class="gap"></span>
        <div class="btn w28">${ic(12, 12, svg`<path d="M1.800 3.500A5 5 0 1 1 1.300 7.500M1 .8V4H4.300M6.200 3.500V6.500L8.500 7.500" fill="none" stroke="#a4a4a4" stroke-width="1.400"/>`)}</div>
        <div class="btn w28 l6">${glass()}</div>
        <div class="btn drop w73 l6">${t("Layers", 36, "l3")}<span class="g"></span>${caret()}<span class="w3"></span></div>
        <div class="btn drop w73 l6">${t("Layout", 36, "l2")}<span class="g"></span>${caret()}<span class="w3"></span></div>
        <span class="w9"></span>
      </div>
      <div class="main"><div class="left"><div class="top">${this.hierarchy()}${this.game()}</div>${this.project()}</div>${this.inspector()}</div>
      <div class="r status"><span class="g"></span>
        ${ic(14, 14, svg`<ellipse cx="7" cy="8" rx="3.800" ry="4.800" fill="#9d9d9d"/><path d="M4.500 3Q7 .5 9.500 3M1 5L4 6.500M1 9H4M2 13L4.500 11M13 5L10 6.500M13 9H10M12 13L9.500 11" stroke="#9d9d9d" stroke-width="1.200" fill="none"/><path d="M2 1L14 13" stroke="#141414" stroke-width="1.500"/><path d="M1 1L13 13" stroke="#9d9d9d" stroke-width="1.200"/>`)}
        ${ic(14, 14, svg`<ellipse cx="7" cy="3" rx="5" ry="2.300" fill="#9d9d9d"/><path d="M2 5.500Q7 8.500 12 5.500V8Q7 10.500 2 8zM2 9.500Q7 12.500 12 9.500V12Q7 14.500 2 12z" fill="#9d9d9d"/><path d="M2 1L14 13" stroke="#141414" stroke-width="1.500"/><path d="M1 1L13 13" stroke="#9d9d9d" stroke-width="1.200"/>`, "l11")}
        ${ic(14, 14, svg`<circle cx="7" cy="7" r="2.800" fill="#9d9d9d"/><path d="M2 4Q6-.5 11.500 3M12 6Q13 10 10.500 12M9 13Q3 14 1.500 8" stroke="#9d9d9d" stroke-width="1.500" fill="none"/><path d="M2 1L14 13" stroke="#141414" stroke-width="1.500"/><path d="M1 1L13 13" stroke="#9d9d9d" stroke-width="1.200"/>`, "l10")}
        ${ic(14, 14, svg`<circle cx="7" cy="7" r="6" fill="none" stroke="#9d9d9d" stroke-width="1.100"/><path d="M4 7L6.300 9.200L10 5" fill="none" stroke="#9d9d9d" stroke-width="1.200"/>`, "l10")}<span class="w6"></span></div>
      ${this.taskbar()}
      <div class="mark">${t("Activate Windows", 148, "m1")}${t("Go to Settings to activate Windows.", 222, "m2")}</div>`;
  }
}
